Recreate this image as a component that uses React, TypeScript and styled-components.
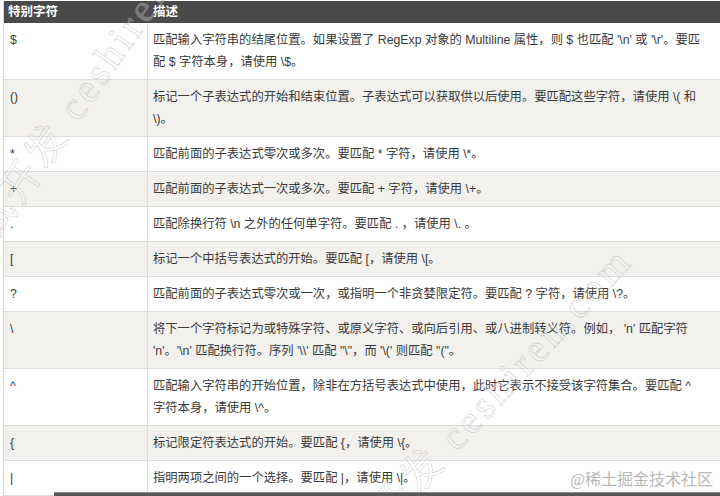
import React from "react";
import styled, { createGlobalStyle } from "styled-components";

const GlobalStyle = createGlobalStyle`
  html, body {
    margin: 0;
    padding: 0;
    background: #ffffff;
    width: 720px;
    height: 496px;
    overflow: hidden;
  }
  body {
    font-family: "Liberation Sans", "Noto Sans CJK SC", sans-serif;
  }
`;

const Page = styled.div`
  position: relative;
  width: 720px;
  height: 496px;
  overflow: hidden;
  box-sizing: border-box;
  padding-top: 1px;
  padding-left: 3px;
  background: #fff;
`;

const Table = styled.div`
  display: grid;
  grid-template-columns: 144px 620px;
  border-left: 1px solid #d6d6d6;
  width: max-content;
`;

const HeadCell = styled.div<{ $first?: boolean }>`
  background: #4a4a4a;
  color: #ffffff;
  font-weight: bold;
  font-size: 12.5px;
  height: 22px;
  line-height: 22px;
  padding-left: ${(p) => (p.$first ? "4px" : "5px")};
  box-sizing: border-box;
  border-right: ${(p) => (p.$first ? "1px solid #5a5a5a" : "none")};
`;

const Cell = styled.div<{ $shade: boolean; $first?: boolean }>`
  background: ${(p) => (p.$shade ? "#f2f1ee" : "#ffffff")};
  color: #3a3a3a;
  font-size: 12.3px;
  line-height: 22px;
  padding: 6px ${(p) => (p.$first ? "6px" : "5px")};
  border-bottom: 1px solid #dcdcdc;
  border-right: ${(p) => (p.$first ? "1px solid #dcdcdc" : "none")};
  white-space: nowrap;
`;

const Line = styled.div``;

const Watermark = styled.div<{ $angle: number }>`
  position: absolute;
  font-family: "Liberation Serif", "Noto Sans CJK SC", serif;
  font-size: 40px;
  letter-spacing: 4px;
  white-space: nowrap;
  color: rgba(255, 255, 255, 0.25);
  -webkit-text-stroke: 0.6px rgba(165, 165, 165, 0.5);
  transform-origin: 0 0;
  transform: rotate(${(p) => p.$angle}deg);
  pointer-events: none;
`;

const Credit = styled.div`
  position: absolute;
  right: 7px;
  bottom: 6px;
  font-family: "Liberation Serif", "Noto Sans CJK SC", serif;
  font-size: 16px;
  color: #b8b8b8;
  white-space: nowrap;
`;

const BottomBar = styled.div`
  position: absolute;
  left: 54px;
  right: 0;
  bottom: 0;
  height: 4px;
  background: #585858;
  border-top: 1px solid #8a8a8a;
  box-sizing: border-box;
`;

const rows: { ch: string; lines: string[] }[] = [
  {
    ch: "$",
    lines: [
      "匹配输入字符串的结尾位置。如果设置了 RegExp 对象的 Multiline 属性，则 $ 也匹配 '\\n' 或 '\\r'。要匹",
      "配 $ 字符本身，请使用 \\$。",
    ],
  },
  {
    ch: "()",
    lines: [
      "标记一个子表达式的开始和结束位置。子表达式可以获取供以后使用。要匹配这些字符，请使用 \\( 和",
      "\\)。",
    ],
  },
  { ch: "*", lines: ["匹配前面的子表达式零次或多次。要匹配 * 字符，请使用 \\*。"] },
  { ch: "+", lines: ["匹配前面的子表达式一次或多次。要匹配 + 字符，请使用 \\+。"] },
  { ch: ".", lines: ["匹配除换行符 \\n 之外的任何单字符。要匹配 . ，请使用 \\. 。"] },
  { ch: "[", lines: ["标记一个中括号表达式的开始。要匹配 [，请使用 \\[。"] },
  { ch: "?", lines: ["匹配前面的子表达式零次或一次，或指明一个非贪婪限定符。要匹配 ? 字符，请使用 \\?。"] },
  {
    ch: "\\",
    lines: [
      "将下一个字符标记为或特殊字符、或原义字符、或向后引用、或八进制转义符。例如， 'n' 匹配字符",
      "'n'。'\\n' 匹配换行符。序列 '\\\\' 匹配 \"\\\"，而 '\\(' 则匹配 \"(\"。",
    ],
  },
  {
    ch: "^",
    lines: [
      "匹配输入字符串的开始位置，除非在方括号表达式中使用，此时它表示不接受该字符集合。要匹配 ^",
      "字符本身，请使用 \\^。",
    ],
  },
  { ch: "{", lines: ["标记限定符表达式的开始。要匹配 {，请使用 \\{。"] },
  { ch: "|", lines: ["指明两项之间的一个选择。要匹配 |，请使用 \\|。"] },
];

export default function App() {
  return (
    <>
      <GlobalStyle />
      <Page>
        <Table>
          <HeadCell $first>特别字符</HeadCell>
          <HeadCell>描述</HeadCell>
          {rows.map((r, i) => (
            <React.Fragment key={i}>
              <Cell $shade={i % 2 === 1} $first>
                {r.ch}
              </Cell>
              <Cell $shade={i % 2 === 1}>
                {r.lines.map((l, j) => (
                  <Line key={j}>{l}</Line>
                ))}
              </Cell>
            </React.Fragment>
          ))}
        </Table>
        <Watermark $angle={-55} style={{ left: -68, top: 252 }}>
          测试开发 ceshiren.com
        </Watermark>
        <Watermark $angle={-47} style={{ left: 294, top: 560 }}>
          测试开发 ceshiren.com
        </Watermark>
        <Credit>@稀土掘金技术社区</Credit>
        <BottomBar />
      </Page>
    </>
  );
}
